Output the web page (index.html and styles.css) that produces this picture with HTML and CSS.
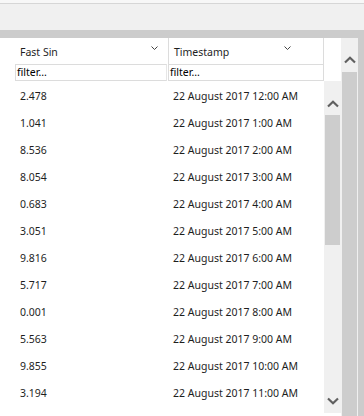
FILE: index.html
```html
<!DOCTYPE html>
<html>
<head>
<meta charset="utf-8">
<link rel="stylesheet" href="styles.css">
</head>
<body>
<div class="toolbar"><div class="toolbar-top"></div></div>
<div class="frame">
  <div class="grid">
    <div class="head">
      <div class="hcell c1"><span>Fast Sin</span><svg class="sort" width="7" height="5" viewBox="0 0 7 5"><polyline points="0.5,0.5 3.5,3.5 6.5,0.5" fill="none" stroke="#444" stroke-width="1"/></svg></div>
      <div class="hcell c2"><span>Timestamp</span><svg class="sort" width="7" height="5" viewBox="0 0 7 5"><polyline points="0.5,0.5 3.5,3.5 6.5,0.5" fill="none" stroke="#444" stroke-width="1"/></svg></div>
      <div class="hfill"></div>
    </div>
    <div class="filters">
      <div class="filter f1">filter...</div>
      <div class="filter f2">filter...</div>
    </div>
    <div class="body">
      <div class="rows">
        <div class="row"><span class="v">2.478</span><span class="t">22 August 2017 12:00 AM</span></div>
        <div class="row"><span class="v">1.041</span><span class="t">22 August 2017 1:00 AM</span></div>
        <div class="row"><span class="v">8.536</span><span class="t">22 August 2017 2:00 AM</span></div>
        <div class="row"><span class="v">8.054</span><span class="t">22 August 2017 3:00 AM</span></div>
        <div class="row"><span class="v">0.683</span><span class="t">22 August 2017 4:00 AM</span></div>
        <div class="row"><span class="v">3.051</span><span class="t">22 August 2017 5:00 AM</span></div>
        <div class="row"><span class="v">9.816</span><span class="t">22 August 2017 6:00 AM</span></div>
        <div class="row"><span class="v">5.717</span><span class="t">22 August 2017 7:00 AM</span></div>
        <div class="row"><span class="v">0.001</span><span class="t">22 August 2017 8:00 AM</span></div>
        <div class="row"><span class="v">5.563</span><span class="t">22 August 2017 9:00 AM</span></div>
        <div class="row"><span class="v">9.855</span><span class="t">22 August 2017 10:00 AM</span></div>
        <div class="row"><span class="v">3.194</span><span class="t">22 August 2017 11:00 AM</span></div>
      </div>
      <div class="vscroll inner">
        <div class="arrow up"><svg width="12" height="8" viewBox="0 0 12 8"><polyline points="1,6.5 6,1.8 11,6.5" fill="none" stroke="#606060" stroke-width="2.2"/></svg></div>
        <div class="thumb"></div>
        <div class="spacer"></div>
        <div class="arrow down"><svg width="12" height="8" viewBox="0 0 12 8"><polyline points="1,1.5 6,6.2 11,1.5" fill="none" stroke="#606060" stroke-width="2.2"/></svg></div>
      </div>
    </div>
  </div>
  <div class="vscroll outer">
    <div class="arrow up"><svg width="12" height="8" viewBox="0 0 12 8"><polyline points="1,6.5 6,1.8 11,6.5" fill="none" stroke="#606060" stroke-width="2.2"/></svg></div>
    <div class="thumb"></div>
  </div>
</div>
</body>
</html>
```
FILE: styles.css
```css
* { box-sizing: border-box; }
html, body { margin: 0; padding: 0; }
body {
  width: 364px;
  height: 416px;
  overflow: hidden;
  background: #fff;
  font-family: "Noto Sans", "Open Sans", sans-serif;
  font-size: 10.5px;
  color: #1e1e1e;
}
.toolbar {
  height: 30px;
  background: #f0f0f0;
}
.toolbar-top {
  height: 4px;
  background: #f7f7f7;
  border-bottom: 1px solid #d6d6d6;
}
.frame {
  display: flex;
  height: 386px;
  border-top: 8px solid #cccccc;
  border-right: 6px solid #cccccc;
  overflow: hidden;
}
.grid {
  width: 341px;
  display: flex;
  flex-direction: column;
}
.head {
  display: flex;
  height: 26px;
}
.hcell {
  display: flex;
  align-items: center;
  justify-content: space-between;
  border-right: 1px solid #dcdcdc;
  padding-top: 2px;
}
.hcell.c1 { width: 169px; padding-left: 20px; padding-right: 10px; }
.hcell.c2 { width: 155px; padding-left: 5px; padding-right: 32px; }
.sort { margin-top: -8px; }
.hfill { flex: 1; }
.filters {
  display: flex;
  height: 17px;
}
.filter {
  height: 17px;
  border: 1px solid #dcdcdc;
  line-height: 14px;
  padding-left: 1px;
  color: #000;
}
.f1 { margin-left: 15px; width: 152px; border-right-color: #e6e6e6; }
.f2 { margin-left: 1px; width: 156px; }
.body {
  flex: 1;
  display: flex;
  min-height: 0;
}
.rows {
  width: 324px;
  padding-top: 1px;
}
.row {
  display: flex;
  height: 27px;
  align-items: center;
}
.row .v { width: 173px; padding-left: 20px; }
.row .t { flex: 1; }
.vscroll {
  width: 17px;
  background: #f0f0f0;
  display: flex;
  flex-direction: column;
  align-items: center;
}
.vscroll .arrow {
  height: 17px;
  width: 17px;
  display: flex;
  align-items: center;
  justify-content: center;
}
.vscroll .thumb {
  width: 15px;
  background: #cdcdcd;
}
.inner {
  height: 332px;
  padding-top: 14px;
}
.inner .thumb { height: 130px; margin-top: 3px; }
.inner .spacer { flex: 1; }
.inner .arrow.down { margin-bottom: 4px; }
.outer {
  padding-top: 13px;
}
.outer .thumb { flex: 1; margin-top: 4px; }
```
